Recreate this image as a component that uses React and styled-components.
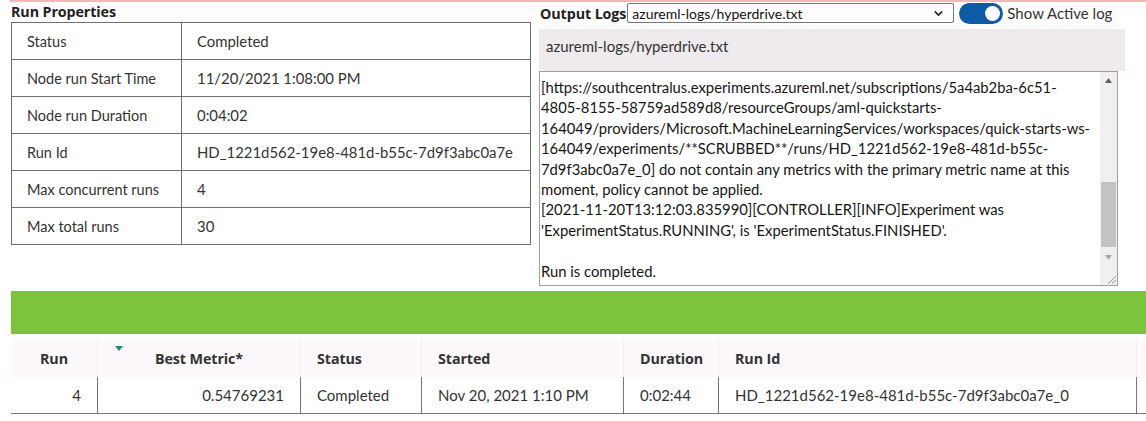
import React from "react";
import styled, { createGlobalStyle } from "styled-components";
import { ChevronDown } from "lucide-react";

const GlobalStyle = createGlobalStyle`
  html, body {
    margin: 0;
    padding: 0;
    background: #ffffff;
  }
  body {
    font-family: Lato, "Open Sans", sans-serif;
    color: #333333;
  }
`;

const headingFont = `"Open Sans", "Noto Sans", sans-serif`;

const Page = styled.div`
  width: 1146px;
  height: 421px;
  overflow: hidden;
`;

const TopLine = styled.div`
  margin-left: 10px;
  height: 2px;
  background: #f4b7b7;
`;

const Inner = styled.div`
  padding-left: 11px;
`;

const TopSection = styled.div`
  display: flex;
  gap: 8px;
  align-items: flex-start;
`;

const LeftPanel = styled.div`
  width: 520px;
  display: flex;
  flex-direction: column;
`;

const SectionTitle = styled.div`
  font-family: ${headingFont};
  font-weight: 700;
  font-size: 14.3px;
  line-height: 20px;
  color: #222;
  height: 20px;
  letter-spacing: -0.1px;
`;

const PropTable = styled.div`
  display: grid;
  grid-template-columns: 169px 1fr;
  border: 1px solid #6f6f6f;
  border-bottom: none;
`;

const PropCell = styled.div`
  height: 36px;
  display: flex;
  align-items: center;
  padding-left: 15px;
  font-size: ${({ $value }) => ($value ? "14.9px" : "14.5px")};
  color: #333;
  border-bottom: 1px solid #6f6f6f;
  border-left: ${({ $value }) => ($value ? "1px solid #6f6f6f" : "none")};
  white-space: nowrap;
`;

const RightPanel = styled.div`
  width: 586px;
  display: flex;
  flex-direction: column;
`;

const LogHeader = styled.div`
  display: flex;
  align-items: center;
  height: 24px;
  margin-top: -1px;
`;

const Label = styled.span`
  font-family: ${headingFont};
  font-weight: 700;
  font-size: 14.3px;
  color: #222;
  margin-left: 1px;
  letter-spacing: -0.1px;
`;

const Select = styled.div`
  width: 327px;
  height: 20px;
  box-sizing: border-box;
  border: 1px solid #767676;
  border-radius: 2px;
  display: flex;
  align-items: center;
  justify-content: space-between;
  padding: 0 8px 0 4px;
  font-size: 14px;
  color: #111;
  margin-left: 1px;
`;

const Toggle = styled.div`
  width: 44px;
  height: 21px;
  border-radius: 11px;
  background: #0d5aa7;
  margin-left: 5px;
  display: flex;
  align-items: center;
  justify-content: flex-end;
  padding-right: 3px;
  box-sizing: border-box;
`;

const Knob = styled.div`
  width: 15px;
  height: 15px;
  border-radius: 50%;
  background: #ffffff;
`;

const ToggleLabel = styled.span`
  font-size: 15px;
  color: #333;
  margin-left: 4px;
`;

const FileBox = styled.div`
  margin-top: 4px;
  height: 42px;
  background: #eeeaee;
  font-size: 15px;
  color: #333;
  padding: 8px 7px;
  box-sizing: border-box;
`;

const LogArea = styled.div`
  width: 579px;
  height: 215px;
  box-sizing: border-box;
  border: 1px solid #9f9f9f;
  display: flex;
`;

const LogText = styled.div`
  flex: 1;
  min-width: 0;
  padding: 5px 0 0 1px;
  font-size: 14.8px;
  line-height: 20.4px;
  color: #151515;
`;

const LogLine = styled.div`
  white-space: nowrap;
  height: 20.4px;
`;

const Scrollbar = styled.div`
  width: 17px;
  flex-shrink: 0;
  background: #f2eff2;
  display: flex;
  flex-direction: column;
`;

const ArrowBtn = styled.div`
  height: 17px;
  display: flex;
  align-items: center;
  justify-content: center;
`;

const Track = styled.div`
  flex: 1;
  display: flex;
  flex-direction: column;
  justify-content: flex-end;
  padding: 0 1px;
`;

const Thumb = styled.div`
  height: 65px;
  background: #c3c3c3;
  margin-bottom: 2px;
`;

const Corner = styled.div`
  height: 19px;
  display: flex;
  align-items: flex-end;
  justify-content: flex-end;
`;

const GreenBar = styled.div`
  margin-top: 5px;
  height: 43px;
  background: #7dc33b;
`;

const RunsTable = styled.div`
  margin-top: 5px;
  display: grid;
  grid-template-columns: 86px 203px 121px 202px 95px 418px 1fr;
`;

const HeadCell = styled.div`
  position: relative;
  height: 38px;
  background: #fcf8fc;
  border-left: ${({ $first }) => ($first ? "none" : "1px solid #f1edf1")};
  display: flex;
  align-items: center;
  justify-content: ${({ $align }) => $align || "flex-start"};
  padding: 0 16px;
  font-family: ${headingFont};
  font-weight: 700;
  font-size: 14.3px;
  letter-spacing: -0.1px;
  color: #333;
  white-space: nowrap;
`;

const SortMark = styled.span`
  position: absolute;
  left: 17px;
  top: 7px;
  width: 0;
  height: 0;
  border-left: 4px solid transparent;
  border-right: 4px solid transparent;
  border-top: 5px solid #1b8b6d;
`;

const DataCell = styled.div`
  height: 36px;
  border-bottom: 1px solid #777;
  border-left: ${({ $first }) => ($first ? "none" : "1px solid #777")};
  display: flex;
  align-items: center;
  justify-content: ${({ $align }) => $align || "flex-start"};
  padding: 0 16px;
  font-size: 15px;
  color: #333;
  white-space: nowrap;
`;

const properties = [
  ["Status", "Completed"],
  ["Node run Start Time", "11/20/2021 1:08:00 PM"],
  ["Node run Duration", "0:04:02"],
  ["Run Id", "HD_1221d562-19e8-481d-b55c-7d9f3abc0a7e"],
  ["Max concurrent runs", "4"],
  ["Max total runs", "30"],
];

const logLines = [
  "[https://southcentralus.experiments.azureml.net/subscriptions/5a4ab2ba-6c51-",
  "4805-8155-58759ad589d8/resourceGroups/aml-quickstarts-",
  "164049/providers/Microsoft.MachineLearningServices/workspaces/quick-starts-ws-",
  "164049/experiments/**SCRUBBED**/runs/HD_1221d562-19e8-481d-b55c-",
  "7d9f3abc0a7e_0] do not contain any metrics with the primary metric name at this",
  "moment, policy cannot be applied.",
  "[2021-11-20T13:12:03.835990][CONTROLLER][INFO]Experiment was",
  "'ExperimentStatus.RUNNING', is 'ExperimentStatus.FINISHED'.",
  "",
  "Run is completed.",
];

const runs = [
  {
    run: "4",
    metric: "0.54769231",
    status: "Completed",
    started: "Nov 20, 2021 1:10 PM",
    duration: "0:02:44",
    id: "HD_1221d562-19e8-481d-b55c-7d9f3abc0a7e_0",
  },
];

const Triangle = ({ up }) => (
  <svg width="7" height="5" viewBox="0 0 7 5">
    <path d={up ? "M0 5 L3.5 0 L7 5 Z" : "M0 0 L3.5 5 L7 0 Z"} fill={up ? "#606060" : "#a8a8a8"} />
  </svg>
);

export default function App() {
  return (
    <Page>
      <GlobalStyle />
      <TopLine />
      <Inner>
        <TopSection>
          <LeftPanel>
            <SectionTitle>Run Properties</SectionTitle>
            <PropTable>
              {properties.map(([k, v]) => (
                <React.Fragment key={k}>
                  <PropCell>{k}</PropCell>
                  <PropCell $value>{v}</PropCell>
                </React.Fragment>
              ))}
            </PropTable>
          </LeftPanel>
          <RightPanel>
            <LogHeader>
              <Label>Output Logs</Label>
              <Select>
                <span>azureml-logs/hyperdrive.txt</span>
                <ChevronDown size={13} strokeWidth={3} color="#222" />
              </Select>
              <Toggle>
                <Knob />
              </Toggle>
              <ToggleLabel>Show Active log</ToggleLabel>
            </LogHeader>
            <FileBox>azureml-logs/hyperdrive.txt</FileBox>
            <LogArea>
              <LogText>
                {logLines.map((l, i) => (
                  <LogLine key={i}>{l}</LogLine>
                ))}
              </LogText>
              <Scrollbar>
                <ArrowBtn>
                  <Triangle up />
                </ArrowBtn>
                <Track>
                  <Thumb />
                </Track>
                <ArrowBtn>
                  <Triangle />
                </ArrowBtn>
                <Corner>
                  <svg width="12" height="12" viewBox="0 0 12 12">
                    <path d="M11 3 L3 11 M11 7 L7 11" stroke="#9a9a9a" strokeWidth="1" />
                  </svg>
                </Corner>
              </Scrollbar>
            </LogArea>
          </RightPanel>
        </TopSection>
        <GreenBar />
        <RunsTable>
          <HeadCell $first $align="center">Run</HeadCell>
          <HeadCell $align="center">
            <SortMark />
            Best Metric*
          </HeadCell>
          <HeadCell>Status</HeadCell>
          <HeadCell>Started</HeadCell>
          <HeadCell>Duration</HeadCell>
          <HeadCell>Run Id</HeadCell>
          <HeadCell />
          {runs.map((r) => (
            <React.Fragment key={r.id}>
              <DataCell $first $align="flex-end">{r.run}</DataCell>
              <DataCell $align="flex-end">{r.metric}</DataCell>
              <DataCell>{r.status}</DataCell>
              <DataCell>{r.started}</DataCell>
              <DataCell>{r.duration}</DataCell>
              <DataCell>{r.id}</DataCell>
              <DataCell />
            </React.Fragment>
          ))}
        </RunsTable>
      </Inner>
    </Page>
  );
}
